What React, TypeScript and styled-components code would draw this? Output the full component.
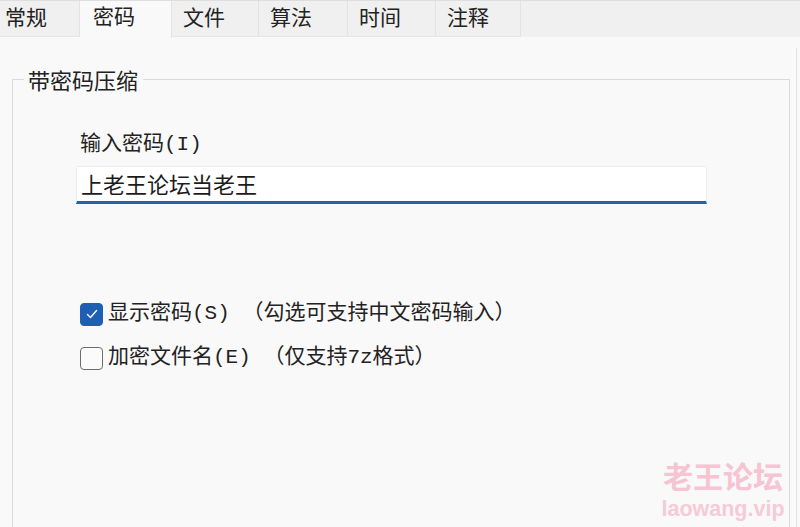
import { type ReactNode } from 'react'
import styled, { createGlobalStyle } from 'styled-components'

const FONT = '"Noto Sans CJK SC", "Noto Sans", sans-serif'
// ASCII in the dialog is drawn in a wide serif mono, CJK falls back to Noto
const MIXED = '"Liberation Mono", "Noto Sans CJK SC", monospace'

const TABS = [
  { label: '常规', width: 86 },
  { label: '密码', width: 92 },
  { label: '文件', width: 87 },
  { label: '算法', width: 89 },
  { label: '时间', width: 88 },
  { label: '注释', width: 85 },
]

const ACTIVE_TAB = 1

const GlobalStyle = createGlobalStyle`
  html, body {
    margin: 0;
    padding: 0;
    background: #f9f9f9;
  }
  body {
    font-family: ${FONT};
    color: #1c1c1c;
  }
`

const App = (): ReactNode => {
  return (
    <Page>
      <GlobalStyle />
      <TabBar>
        {TABS.map((t, i) => (
          <Tab key={t.label} $active={i === ACTIVE_TAB} $first={i === 0} style={{ width: t.width }}>
            {t.label}
          </Tab>
        ))}
      </TabBar>

      <Content>
        <Panel>
          <Group>
            <Legend>带密码压缩</Legend>
            <GroupBody>
              <FieldLabel>输入密码(I)</FieldLabel>
              <PasswordInput type="text" defaultValue="上老王论坛当老王" spellCheck={false} />

              <Options>
                <OptionRow>
                  <Box $checked>
                    <svg width="14" height="14" viewBox="0 0 14 14">
                      <polyline points="2.5,7.5 5.5,10.5 11.5,3.5" fill="none" stroke="#fff" strokeWidth="1.4" strokeLinecap="round" strokeLinejoin="round" />
                    </svg>
                  </Box>
                  <OptionText>显示密码(S) （勾选可支持中文密码输入）</OptionText>
                </OptionRow>
                <OptionRow>
                  <Box $checked={false} />
                  <OptionText>加密文件名(E) （仅支持7z格式）</OptionText>
                </OptionRow>
              </Options>
            </GroupBody>
          </Group>
        </Panel>
      </Content>

      <Watermark>
        <WatermarkTitle>老王论坛</WatermarkTitle>
        <WatermarkUrl>laowang.vip</WatermarkUrl>
      </Watermark>
    </Page>
  )
}

export default App

const Page = styled.div`
  position: relative;
  width: 800px;
  height: 527px;
  overflow: hidden;
  display: flex;
  flex-direction: column;
  background: #f9f9f9;
`

const TabBar = styled.div`
  display: flex;
  height: 37px;
  flex-shrink: 0;
  background: #f0f0f0;
  border-top: 1px solid #dedede;
  box-sizing: border-box;
`

const Tab = styled.div<{ $active: boolean; $first: boolean }>`
  box-sizing: border-box;
  height: ${(p) => (p.$active ? '37px' : '36px')};
  margin-left: ${(p) => (p.$first ? '-6px' : '0')};
  padding: ${(p) => (p.$active ? '0 0 10px 13px' : '0 0 5px 11px')};
  display: flex;
  align-items: center;
  font-size: 21px;
  line-height: 26px;
  color: #222;
  background: ${(p) => (p.$active ? '#f9f9f9' : '#f0f0f0')};
  border-right: 1px solid #e3e3e3;
  border-bottom: ${(p) => (p.$active ? 'none' : '1px solid #e6e6e6')};
`

const Content = styled.div`
  flex: 1;
  display: flex;
  flex-direction: column;
  padding: 11px 3px 0 0;
  min-height: 0;
`

const Panel = styled.div`
  flex: 1;
  border-right: 1px solid #e2e2e2;
  display: flex;
  flex-direction: column;
`

const Group = styled.fieldset`
  margin: 18px 6px 0 12px;
  padding: 0;
  border: 1px solid #dadada;
  min-height: 600px;
  font-family: ${FONT};
`

const Legend = styled.legend`
  margin-left: 11px;
  padding: 0 5px 0 4px;
  font-size: 22px;
  line-height: 26px;
  color: #222;
`

const GroupBody = styled.div`
  padding-left: 67px;
  display: flex;
  flex-direction: column;
  align-items: flex-start;
`

const FieldLabel = styled.div`
  margin-top: 40px;
  font-family: ${MIXED};
  font-size: 21px;
  line-height: 26px;
  color: #222;
`

const PasswordInput = styled.input`
  box-sizing: border-box;
  margin: 8px 0 0 -4px;
  width: 631px;
  height: 38px;
  padding: 0 4px 3px;
  font-family: ${FONT};
  font-size: 22px;
  color: #1c1c1c;
  background: #ffffff;
  border: 1px solid #ececec;
  border-bottom: 3px solid #2063ae;
  border-radius: 2px 2px 0 0;
  outline: none;
`

const Options = styled.div`
  margin-top: 97px;
  display: flex;
  flex-direction: column;
  gap: 18px;
`

const OptionRow = styled.label`
  display: flex;
  align-items: center;
  gap: 5px;
  height: 26px;
`

const Box = styled.span<{ $checked: boolean }>`
  box-sizing: border-box;
  width: 23px;
  height: 23px;
  border-radius: 4px;
  display: flex;
  align-items: center;
  justify-content: center;
  background: ${(p) => (p.$checked ? '#1f5fb3' : '#fbfbfb')};
  border: ${(p) => (p.$checked ? '1px solid #1f5fb3' : '1.5px solid #6d6d6d')};
`

const OptionText = styled.span`
  font-family: ${MIXED};
  font-size: 21px;
  line-height: 26px;
  color: #222;
  white-space: pre;
`

const Watermark = styled.div`
  position: absolute;
  left: 661px;
  top: 460px;
  width: 124px;
  display: flex;
  flex-direction: column;
  align-items: center;
  gap: 7px;
  pointer-events: none;
`

const WatermarkTitle = styled.div`
  font-family: ${FONT};
  font-weight: 700;
  font-size: 30px;
  line-height: 30px;
  color: #f6c4d2;
`

const WatermarkUrl = styled.div`
  font-family: "Liberation Sans", "Noto Sans", sans-serif;
  font-weight: 700;
  font-size: 21.5px;
  line-height: 24px;
  color: #f6cad7;
`
